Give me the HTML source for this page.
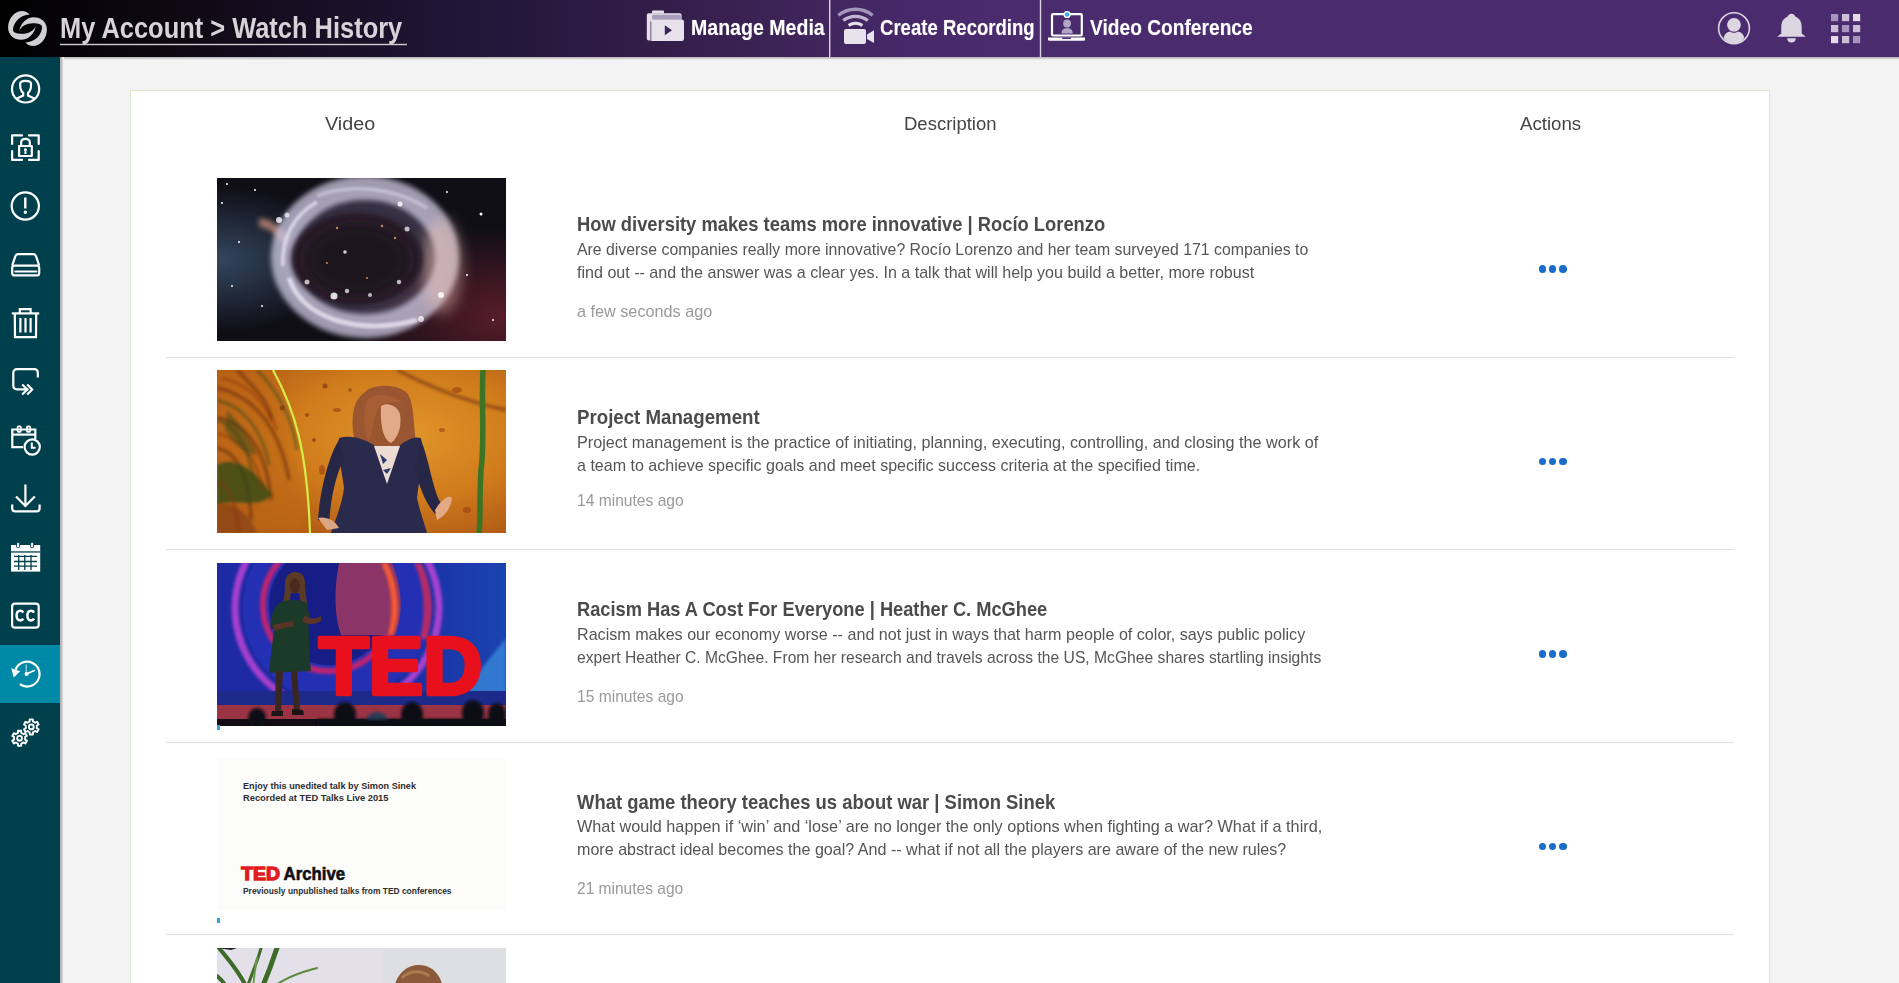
<!DOCTYPE html><html><head><meta charset="utf-8"><title>Watch History</title><style>
*{margin:0;padding:0;box-sizing:border-box}
html,body{width:1899px;height:983px;overflow:hidden;background:#f3f3f3;font-family:"Liberation Sans",sans-serif}
.a{position:absolute}
.t{position:absolute;white-space:nowrap;line-height:normal;transform-origin:0 0}
#hdr{left:0;top:0;width:1899px;height:57px;background:linear-gradient(90deg,#000 0%,#120b19 12%,#24163a 26%,#38214f 38%,#47296a 48%,#4a2b6d 52%,#4a2b6d 100%)}
#hsh{left:0;top:57px;width:1899px;height:3px;background:linear-gradient(#bdbdbd,#bdbdbd 33%,#e0e0e0 66%,#f3f3f3)}
#side{left:0;top:57px;width:60px;height:926px;background:#00404d}
#ssh{left:60px;top:57px;width:4px;height:926px;background:linear-gradient(90deg,#b8b5b5 0,#bdbaba 40%,#d8d8d8 60%,#ededed 85%,#f3f3f3)}
#act{left:0;top:644.5px;width:60px;height:58.3px;background:#0089a7}
#card{left:130px;top:90px;width:1640px;height:900px;background:#fff;border:1px solid #dbe9cd}
.sep{position:absolute;left:166px;width:1568px;height:1px;background:#dedede}
.dots{position:absolute;width:30px;height:8px}
.dots i{position:absolute;top:0;width:7.6px;height:7.6px;border-radius:50%;background:#1a6dc8}
.thumb{position:absolute;left:217px;width:289px;height:163px;overflow:hidden}
.prog{position:absolute;left:217px;width:3px;height:5px;background:#2aa3e0}
</style></head><body>
<div class="a" id="hdr"></div><div class="a" id="hsh"></div>

<svg class="a" style="left:0;top:0" width="1899" height="57">
<!-- logo -->
<g fill="#d0cfd2">
<path id="lgA" d="M29.6 14.4 C26.8 11.8 24.8 11 22.4 11 C14.5 11 8.1 18.5 8.1 27.5 C8.1 35 14 39.8 21.1 39.8 C28.5 39.8 34.5 33.5 35.8 26.2 C33.5 31 28.5 33.8 22 33.8 C16.5 33.8 12.6 32.5 13 29.5 C13.5 22 20 15 29.6 14.4 Z"/>
<use href="#lgA" transform="rotate(180 27.5 28.5)"/>
</g>
<rect x="60" y="43.8" width="347" height="1.4" fill="#cfcdd2"/>
<!-- dividers -->
<rect x="829" y="0" width="1.4" height="57" fill="#d9d2e1"/>
<rect x="1039.8" y="0" width="1.4" height="57" fill="#d9d2e1"/>
<!-- folder -->
<path d="M652 13.5 V11.6 C652 10.9 652.5 10.5 653.2 10.5 H663 C663.6 10.5 664 10.9 664 11.5 V13.5 Z" fill="#e4dfe9"/>
<path d="M648.8 13.3 H679.5 C680.8 13.3 681.6 14.1 681.6 15.4 V19.5 H652 V40.5 H648.8 C647.6 40.5 646.8 39.8 646.8 38.6 V15.4 C646.8 14.1 647.6 13.3 648.8 13.3 Z" fill="#e4dfe9"/>
<rect x="652" y="14.8" width="29" height="4.8" rx="1.5" fill="#a99dbd"/>
<rect x="650" y="19.4" width="34" height="21.5" rx="2.2" fill="#e6e1ea"/>
<path d="M650 21.4 V40.9 H651.5 V21.4 Z" fill="#3c2a55" opacity=".5"/>
<path d="M664.8 25.3 L672 30.3 L664.8 35.3 Z" fill="#3a2456"/>
<!-- recording -->
<g fill="none" stroke-linecap="butt">
<path d="M838.3 15.3 A27.3 27.3 0 0 1 872.7 15.3" stroke="#a395bb" stroke-width="3.4"/>
<path d="M843.2 20.6 A20 20 0 0 1 867.8 20.6" stroke="#c2b6d2" stroke-width="3.2"/>
<path d="M848.6 25.4 A13.2 13.2 0 0 1 862.4 25.4" stroke="#e6e1ec" stroke-width="3"/>
</g>
<rect x="844" y="29" width="22" height="15" rx="2" fill="#e7e3ec"/>
<path d="M867 34.6 L874 30.2 V43 L867 39 Z" fill="#e7e3ec"/>
<!-- laptop -->
<rect x="1052" y="14.1" width="29.8" height="21.4" rx="1" fill="none" stroke="#fff" stroke-width="2.2"/>
<path d="M1048 37.6 H1085 V39.5 C1085 40.3 1084.4 40.8 1083.6 40.8 H1049.4 C1048.6 40.8 1048 40.3 1048 39.5 Z" fill="#fff"/>
<path d="M1062 37.6 H1071 V38.3 C1071 38.6 1070.6 38.9 1070 38.9 H1063 C1062.4 38.9 1062 38.6 1062 38.3 Z" fill="#4a2b6d"/>
<circle cx="1067.1" cy="14.5" r="3.6" fill="#fff"/>
<circle cx="1067.1" cy="14.5" r="2.3" fill="#3ab0e6"/>
<circle cx="1067.1" cy="23.5" r="3.9" fill="#b3a6c6"/>
<path d="M1061.5 33.5 C1061.5 30 1063.5 28.3 1067.1 28.3 C1070.7 28.3 1072.7 30 1072.7 33.5 Z" fill="#b3a6c6"/>
<!-- right icons -->
<circle cx="1734" cy="28.2" r="15.4" fill="none" stroke="#dcd6e3" stroke-width="1.6"/>
<circle cx="1734" cy="24.8" r="6.9" fill="#dcd6e3"/>
<path d="M1723.6 37.8 C1724.8 33.5 1727.5 31.6 1730 31.4 C1731.2 32.3 1732.5 32.7 1734 32.7 C1735.5 32.7 1736.8 32.3 1738 31.4 C1740.5 31.6 1743.2 33.5 1744.4 37.8 C1741.8 41.6 1738.2 43.6 1734 43.6 C1729.8 43.6 1726.2 41.6 1723.6 37.8 Z" fill="#dcd6e3"/>
<path d="M1791.5 13.8 C1789 13.8 1788.5 15.4 1787.4 16.8 C1783 18.4 1781.3 22.6 1781.3 27 V33.5 L1777.2 36.8 H1805.8 L1801.7 33.5 V27 C1801.7 22.6 1800 18.4 1795.6 16.8 C1794.5 15.4 1794 13.8 1791.5 13.8 Z" fill="#dcd6e3"/>
<path d="M1787.2 38.2 H1795.8 C1795.8 41 1794 42.6 1791.5 42.6 C1789 42.6 1787.2 41 1787.2 38.2 Z" fill="#dcd6e3"/>
<g>
<rect x="1831" y="14" width="7.2" height="7.2" fill="#a594bc"/>
<rect x="1842" y="14" width="7.2" height="7.2" fill="#cbc0d7"/>
<rect x="1853" y="14" width="7.2" height="7.2" fill="#e2dbe8"/>
<rect x="1831" y="25" width="7.2" height="7.2" fill="#cbc0d7"/>
<rect x="1842" y="25" width="7.2" height="7.2" fill="#a594bc"/>
<rect x="1853" y="25" width="7.2" height="7.2" fill="#cbc0d7"/>
<rect x="1831" y="36" width="7.2" height="7.2" fill="#e2dbe8"/>
<rect x="1842" y="36" width="7.2" height="7.2" fill="#cbc0d7"/>
<rect x="1853" y="36" width="7.2" height="7.2" fill="#a594bc"/>
</g>
</svg>
<div class="a" id="card"></div>
<div class="a" id="side"></div><div class="a" id="ssh"></div><div class="a" id="act"></div>
<svg class="a" style="left:0;top:57px" width="60" height="926" viewBox="0 57 60 926">
<g stroke="#fff" fill="none" stroke-width="2.2">
<circle cx="25.6" cy="88.9" r="13.6"/>
<path d="M16.4 98.8 L23.2 95.6 V93 C21.2 91.4 20.2 88.6 20.2 85.6 V83.8 C20.2 81.7 22.2 80.9 25.6 80.9 C29 80.9 31 81.7 31 83.8 V85.6 C31 88.6 30 91.4 28 93 V95.6 L34.8 98.8"/>
</g>
<g stroke="#fff" fill="none" stroke-width="2.2" stroke-width="2.1" stroke-linecap="round" stroke-linejoin="round">
<path d="M12.1 144 V135.4 H22 M29 135.4 H38.7 V144 M38.7 151.2 V159.9 H29 M22 159.9 H12.1 V151.2"/>
<rect x="19.1" y="146" width="12.7" height="10"/>
<path d="M21.1 146 V142.6 C21.1 139.9 23 138.9 25.45 138.9 C27.9 138.9 29.8 139.9 29.8 142.6 V146"/>
</g>
<path d="M25.45 148.2 C26.4 148.2 27 148.9 27 149.8 C27 150.4 26.7 150.8 26.3 151.1 L26.6 154 H24.3 L24.6 151.1 C24.2 150.8 23.9 150.4 23.9 149.8 C23.9 148.9 24.5 148.2 25.45 148.2 Z" fill="#fff"/>
<g stroke="#fff" fill="none" stroke-width="2.2">
<circle cx="25.3" cy="206" r="13.6"/>
<path d="M25.3 197.5 V208.5" stroke-width="2.4"/>
<circle cx="25.3" cy="212.3" r="1" stroke-width="1.4"/>
</g>
<g stroke="#fff" fill="none" stroke-width="2.2">
<path d="M12.2 265.6 L15.3 256.4 C15.8 255 16.8 254.2 18.4 254.2 H33 C34.6 254.2 35.6 255 36.1 256.4 L39.2 265.6"/>
<rect x="12.2" y="265.6" width="27" height="9.8" rx="2.5"/>
<path d="M15.2 271.6 H36.4" stroke-width="2" stroke-linecap="round"/>
</g>
<g stroke="#fff" fill="none" stroke-width="2.2">
<path d="M11.8 313.4 H39.2"/>
<path d="M19.8 313 V309.2 H30.6 V313"/>
<path d="M14.8 313.4 L15 337.2 H36 L36.2 313.4"/>
<path d="M20.4 318 V332.5 M25.5 318 V332.5 M30.6 318 V332.5"/>
</g>
<g stroke="#fff" fill="none" stroke-width="2.2">
<path d="M37.8 377.6 V373 C37.8 370.6 36.5 369.2 34.2 369.2 H17 C14.7 369.2 13.3 370.6 13.3 373 V385.6 C13.3 388 14.7 389.3 17 389.3 H28.4"/>
<path d="M22.2 384.4 L27.2 389.5 L22.2 394.6 M27.2 384.4 L32.2 389.5 L27.2 394.6" stroke-width="2.2"/>
</g>
<g stroke="#fff" fill="none" stroke-width="2.2">
<path d="M23 447.2 H12.3 V429.5 H35.3 V439"/>
<path d="M12.3 434.6 H35.3"/>
<rect x="17.6" y="426.3" width="3.2" height="5.6" rx="1" stroke-width="1.8"/>
<rect x="27" y="426.3" width="3.2" height="5.6" rx="1" stroke-width="1.8"/>
<circle cx="32.2" cy="447" r="7.6" fill="#00404d"/>
<path d="M31.8 442.5 V447.8 H35.6" stroke-width="2"/>
</g>
<g stroke="#fff" fill="none" stroke-width="2.2">
<path d="M25.4 484.5 V506"/>
<path d="M16 496.5 L25.4 506 L34.8 496.5"/>
<path d="M12.2 504.5 V508.5 C12.2 510.6 13.4 511.4 15.4 511.4 H36.4 C38.4 511.4 39.6 510.6 39.6 508.5 V504.5"/>
</g>
<rect x="11" y="545" width="29.2" height="26.6" fill="#fff"/>
<rect x="11" y="551.3" width="29.2" height="1.3" fill="#00404d"/>
<g stroke="#00404d" stroke-width="1.3" fill="none">
<path d="M18.7 555 V570 M24.8 555 V570 M31 555 V570 M14 556.4 H37 M14 561.5 H37 M14 566.2 H37"/>
</g>
<rect x="16.6" y="542.6" width="3" height="5" rx="1" fill="#fff" stroke="#00404d" stroke-width="1"/>
<rect x="30.6" y="542.6" width="3" height="5" rx="1" fill="#fff" stroke="#00404d" stroke-width="1"/>
<rect x="12.1" y="603.7" width="26.6" height="24" rx="3" stroke="#fff" fill="none" stroke-width="2.2"/>
<g fill="none" stroke="#fff" stroke-width="2.5"><path d="M23.2 612.6 C22.6 611.4 21.6 610.8 20.2 610.8 C17.9 610.8 16.6 612.6 16.6 615.6 C16.6 618.6 17.9 620.4 20.2 620.4 C21.6 620.4 22.6 619.8 23.2 618.6"/><path d="M34 612.6 C33.4 611.4 32.4 610.8 31 610.8 C28.7 610.8 27.4 612.6 27.4 615.6 C27.4 618.6 28.7 620.4 31 620.4 C32.4 620.4 33.4 619.8 34 618.6"/></g>
<g stroke="#fff" fill="none" stroke-width="2.2">
<path d="M15.6 669.6 A12.4 12.4 0 1 1 19.9 684.2"/>
<path d="M26.3 673.8 V664.5" stroke-width="1.3" stroke="#9fd6e2"/>
<path d="M26.5 674 L34.8 670.2" stroke-width="1.8"/>
</g>
<circle cx="26.5" cy="674" r="2" fill="#fff"/>
<path d="M11.2 668.2 L20.2 671.3 L13.8 677.5 Z" fill="#fff"/>
<g fill="none" stroke="#fff" stroke-width="1.9" stroke-linejoin="round">
<path d="M29.71 721.43 L29.70 719.37 L32.90 719.37 L32.89 721.43 L35.25 722.79 L37.02 721.75 L38.62 724.52 L36.84 725.54 L36.84 728.26 L38.62 729.28 L37.02 732.05 L35.25 731.01 L32.89 732.37 L32.90 734.43 L29.70 734.43 L29.71 732.37 L27.35 731.01 L25.58 732.05 L23.98 729.28 L25.76 728.26 L25.76 725.54 L23.98 724.52 L25.58 721.75 L27.35 722.79 Z"/><circle cx="31.3" cy="726.9" r="2.4"/>
<path d="M18.01 732.83 L18.00 730.77 L21.20 730.77 L21.19 732.83 L23.55 734.19 L25.32 733.15 L26.92 735.92 L25.14 736.94 L25.14 739.66 L26.92 740.68 L25.32 743.45 L23.55 742.41 L21.19 743.77 L21.20 745.83 L18.00 745.83 L18.01 743.77 L15.65 742.41 L13.88 743.45 L12.28 740.68 L14.06 739.66 L14.06 736.94 L12.28 735.92 L13.88 733.15 L15.65 734.19 Z"/><circle cx="19.6" cy="738.3" r="2.4"/>
</g>
</svg>
<div class="sep" style="top:357px"></div>
<div class="sep" style="top:549px"></div>
<div class="sep" style="top:742px"></div>
<div class="sep" style="top:934px"></div>
<div class="thumb" style="top:178px"><svg width="289" height="163" viewBox="0 0 289 163">
<defs>
<radialGradient id="n_l" cx="0" cy=".5" r=".45"><stop offset="0" stop-color="#34465e"/><stop offset="1" stop-color="#34465e" stop-opacity="0"/></radialGradient>
<radialGradient id="n_r" cx="1" cy=".85" r=".55"><stop offset="0" stop-color="#5a1c2a"/><stop offset="1" stop-color="#5a1c2a" stop-opacity="0"/></radialGradient>
<radialGradient id="n_in" cx=".5" cy=".5" r=".5"><stop offset="0" stop-color="#1c121c"/><stop offset=".75" stop-color="#2a1a28"/><stop offset="1" stop-color="#5a4a66"/></radialGradient>
<filter id="blur3" filterUnits="userSpaceOnUse" x="-100" y="-100" width="500" height="400"><feGaussianBlur stdDeviation="2.5"/></filter>
<filter id="blur6" filterUnits="userSpaceOnUse" x="-100" y="-100" width="500" height="400"><feGaussianBlur stdDeviation="7"/></filter>
<filter id="blur1" filterUnits="userSpaceOnUse" x="-100" y="-100" width="500" height="400"><feGaussianBlur stdDeviation="1"/></filter>
</defs>
<rect width="289" height="163" fill="#0f0e16"/>
<rect width="289" height="163" fill="url(#n_l)"/>
<rect width="289" height="163" fill="url(#n_r)"/>
<path d="M42 45 C50 44 62 52 70 64" fill="none" stroke="#f0a888" stroke-width="9" opacity=".6" filter="url(#blur3)"/>
<ellipse cx="150" cy="79" rx="86" ry="70" fill="#6a6480" opacity=".42" filter="url(#blur6)"/>
<ellipse cx="148" cy="79" rx="82" ry="69" fill="none" stroke="#d4cee6" stroke-width="24" opacity=".72" filter="url(#blur3)"/>
<ellipse cx="225" cy="88" rx="20" ry="48" fill="#f2c4b4" opacity=".45" filter="url(#blur6)"/>
<ellipse cx="140" cy="81" rx="66" ry="46" fill="#2a1c2c" filter="url(#blur3)"/>
<ellipse cx="140" cy="82" rx="52" ry="36" fill="#1c121c" filter="url(#blur6)"/>
<path d="M72 100 C85 140 140 158 200 142" fill="none" stroke="#f0ecf8" stroke-width="5" opacity=".7" filter="url(#blur1)"/>
<path d="M66 88 C64 60 78 36 100 24" fill="none" stroke="#e8e4f4" stroke-width="4" opacity=".7" filter="url(#blur1)"/>
<path d="M100 18 C130 6 175 8 210 30" fill="none" stroke="#d8d4ea" stroke-width="4" opacity=".55" filter="url(#blur1)"/>
<g fill="#fff">
<circle cx="117" cy="118" r="3.5" opacity=".85"/><circle cx="62" cy="42" r="3" opacity=".8"/><circle cx="70" cy="37" r="2.5" opacity=".7"/><circle cx="183" cy="26" r="2.5" opacity=".8"/>
<circle cx="190" cy="51" r="2.5" opacity=".7"/><circle cx="224" cy="117" r="3" opacity=".85"/><circle cx="204" cy="141" r="3" opacity=".7"/>
<circle cx="128" cy="74" r="1.8" opacity=".8"/><circle cx="130" cy="113" r="2.2" opacity=".7"/><circle cx="153" cy="117" r="2" opacity=".7"/><circle cx="182" cy="104" r="2.2" opacity=".7"/><circle cx="90" cy="104" r="2.5" opacity=".7"/>
<circle cx="264" cy="36" r="1.5"/><circle cx="5" cy="25" r="1"/><circle cx="15" cy="108" r="1"/><circle cx="45" cy="128" r="1"/><circle cx="276" cy="142" r="1"/>
<circle cx="250" cy="97" r="1"/><circle cx="230" cy="14" r="1"/><circle cx="22" cy="64" r="1"/><circle cx="10" cy="6" r="1"/><circle cx="38" cy="12" r="1"/>
</g>
<g fill="#f0a070" opacity=".8"><circle cx="120" cy="50" r="1.2"/><circle cx="165" cy="48" r="1.2"/><circle cx="178" cy="60" r="1.2"/><circle cx="110" cy="85" r="1"/><circle cx="150" cy="100" r="1"/></g>
</svg></div>
<div class="thumb" style="top:370px"><svg width="289" height="163" viewBox="0 0 289 163">
<defs>
<radialGradient id="o_bg" cx=".65" cy=".4" r=".7"><stop offset="0" stop-color="#e0962a"/><stop offset=".55" stop-color="#d07c1c"/><stop offset="1" stop-color="#b05a16"/></radialGradient>
<filter id="ob2" filterUnits="userSpaceOnUse" x="-100" y="-100" width="500" height="400"><feGaussianBlur stdDeviation="1.5"/></filter>
<filter id="ob4" filterUnits="userSpaceOnUse" x="-100" y="-100" width="500" height="400"><feGaussianBlur stdDeviation="4"/></filter>
</defs>
<rect width="289" height="163" fill="url(#o_bg)"/>
<path d="M0 0 H60 C70 50 80 100 90 163 H0 Z" fill="#c06a18" opacity=".6" filter="url(#ob4)"/>
<g fill="none" stroke="#6a2e10" stroke-width="3.5" opacity=".6" filter="url(#ob2)">
<path d="M0 18 C35 25 62 55 72 110"/><path d="M0 48 C28 52 50 80 54 130"/><path d="M0 78 C18 82 32 100 34 150"/>
<path d="M20 0 C40 20 50 30 55 50"/><path d="M180 0 C200 10 240 30 289 40"/>
</g>
<path d="M0 95 C15 85 40 100 55 125 C40 140 20 128 0 135 Z" fill="#2a4a18" opacity=".75" filter="url(#ob2)"/>
<path d="M0 135 C15 130 30 140 40 163 H0 Z" fill="#7a3a12" opacity=".6" filter="url(#ob2)"/>
<g fill="none" stroke="#8a3010" stroke-width="2.5" opacity=".55" filter="url(#ob2)"><path d="M5 8 C30 14 48 30 60 60"/><path d="M0 64 C20 66 40 84 45 120"/><path d="M0 112 C10 115 20 130 22 163"/></g>
<g fill="none" stroke="#3a4a1a" stroke-width="3" opacity=".55" filter="url(#ob2)"><path d="M0 30 C25 36 45 58 52 95"/><path d="M0 50 C18 55 32 75 36 110"/><path d="M40 0 C60 20 75 45 80 80"/></g>
<g fill="#8a2a0c" opacity=".45"><ellipse cx="120" cy="40" rx="4" ry="2"/><ellipse cx="105" cy="100" rx="3" ry="5"/><ellipse cx="240" cy="20" rx="5" ry="3"/><ellipse cx="250" cy="140" rx="4" ry="3"/><ellipse cx="225" cy="60" rx="3" ry="2"/></g>
<path d="M10 40 C25 55 35 70 40 85 C28 85 15 72 8 60 Z" fill="#3a4a18" opacity=".5" filter="url(#ob2)"/>
<g fill="#7a3010" opacity=".6"><circle cx="108" cy="16" r="2.5"/><circle cx="133" cy="20" r="1.8"/><circle cx="65" cy="38" r="2.5"/><circle cx="90" cy="45" r="2"/><circle cx="97" cy="70" r="2"/></g>
<path d="M56 0 C78 40 90 80 93 163" fill="none" stroke="#d6ec4a" stroke-width="2.2"/>
<path d="M266 0 C264 40 268 70 264 100 C262 130 264 150 262 163" fill="none" stroke="#3a7424" stroke-width="5.5"/>
<!-- woman -->
<path d="M148 22 C155 14 180 13 190 23 C198 33 196 58 200 78 L188 88 L150 88 C138 80 134 60 136 45 C137 35 140 28 148 22 Z" fill="#9a5630"/>
<path d="M164 36 C170 32 180 35 183 44 C185 56 181 68 174 73 C167 70 163 58 164 36 Z" fill="#e2aa88"/>
<path d="M150 30 C160 22 178 24 186 34 C178 30 166 32 160 40 C156 50 156 62 152 72 C146 60 146 40 150 30 Z" fill="#a85e34"/>
<path d="M122 68 C135 64 150 70 158 76 L182 76 C190 70 196 66 204 68 C207 90 202 110 200 128 C203 142 208 155 210 163 L114 163 C118 150 125 135 127 118 C125 100 120 85 122 68 Z" fill="#2a2a4c"/>
<path d="M122 70 C112 85 103 120 101 150 L112 153 C114 126 120 100 128 88 Z" fill="#262646"/>
<path d="M204 70 C212 90 215 115 222 130 L226 136 L218 144 C208 132 203 118 198 100 Z" fill="#262646"/>
<path d="M157 76 L183 76 L170 114 Z" fill="#ecdcd4"/>
<path d="M163 84 L170 90 L166 94 Z M166 100 L174 98 L170 104 Z" fill="#2a3a6a"/>
<path d="M218 140 C224 130 232 124 235 128 C234 138 228 146 220 150 Z" fill="#e4aa86"/>
<path d="M101 148 C108 146 118 150 122 158 L110 160 Z" fill="#dca684"/>
</svg></div>
<div class="thumb" style="top:563px"><svg width="289" height="163" viewBox="0 0 289 163">
<defs>
<filter id="bb2" filterUnits="userSpaceOnUse" x="-100" y="-100" width="500" height="400"><feGaussianBlur stdDeviation="1.5"/></filter>
<filter id="bb4" filterUnits="userSpaceOnUse" x="-100" y="-100" width="500" height="400"><feGaussianBlur stdDeviation="4"/></filter>
<linearGradient id="b_bg" x1="0" x2="1"><stop offset="0" stop-color="#1e2aa4"/><stop offset=".55" stop-color="#1a28a0"/><stop offset="1" stop-color="#1a44b0"/></linearGradient>
</defs>
<rect width="289" height="163" fill="url(#b_bg)"/>
<circle cx="120" cy="45" r="102" fill="none" stroke="#c844d8" stroke-width="7" opacity=".8" filter="url(#bb2)"/>
<circle cx="120" cy="45" r="94" fill="#2430b4"/>
<circle cx="112" cy="42" r="66" fill="none" stroke="#d0206a" stroke-width="6" opacity=".9" filter="url(#bb2)"/>
<circle cx="112" cy="42" r="60" fill="#161e86"/>
<path d="M122 0 H175 C186 25 186 52 178 72 H124 C116 50 118 20 122 0 Z" fill="#8a3468"/>
<path d="M170 0 C182 22 184 52 176 72 L171 72 C177 52 176 22 164 0 Z" fill="#f85a30" filter="url(#bb2)"/>
<path d="M204 0 C216 22 218 52 210 76 L203 76 C209 52 208 22 197 0 Z" fill="#c82a60" opacity=".9" filter="url(#bb2)"/>
<path d="M245 130 L289 75 V130 Z" fill="#3a90e0" opacity=".7" filter="url(#bb2)"/>
<rect y="128" width="289" height="14" fill="#1e2a8a"/>
<rect y="142" width="289" height="14" fill="#9a3444"/>
<rect y="156" width="289" height="7" fill="#120c14"/>
<text x="102" y="130.5" font-family="Liberation Sans" font-weight="700" font-size="81" fill="#e8101c" stroke="#e8101c" stroke-width="4.5" stroke-linejoin="round" textLength="163" lengthAdjust="spacingAndGlyphs">TED</text>
<!-- woman -->
<path d="M68 24 C67 14 72 9 78 9 C85 9 89 14 88 24 C89 34 91 42 90 50 L84 48 C84 40 83 34 82 30 L74 30 C73 36 72 42 70 50 L64 50 C65 42 68 34 68 24 Z" fill="#5a3c24"/>
<ellipse cx="78" cy="23" rx="5" ry="7.5" fill="#4a2a1e"/>
<path d="M62 40 C68 36 84 36 90 40 C92 62 92 90 94 108 L52 110 C54 90 57 62 62 40 Z" fill="#1c3a2a"/>
<path d="M62 40 C55 48 52 58 54 66 L66 63 L66 46 Z" fill="#1c3a2a"/>
<path d="M88 42 C92 48 94 52 92 58 L84 58 Z" fill="#1c3a2a"/>
<path d="M56 62 C62 60 70 59 76 58 L77 63 C70 64 63 66 57 68 Z" fill="#5a3424"/>
<path d="M88 52 C92 56 97 57 104 53 L104 58 C97 62 90 62 85 58 Z" fill="#5a3424"/>
<path d="M59 108 L58 148 L64 150 L66 108 Z M74 108 L77 148 L83 148 L80 108 Z" fill="#3a2620"/>
<path d="M55 148 L66 148 L66 153 L54 153 Z M75 146 L86 147 L87 152 L75 152 Z" fill="#1a1414"/>
<g fill="#0e0c18" filter="url(#bb2)">
<ellipse cx="40" cy="155" rx="9" ry="10"/><ellipse cx="128" cy="152" rx="11" ry="13"/><ellipse cx="160" cy="158" rx="11" ry="9" fill="#2a3a58"/>
<ellipse cx="195" cy="152" rx="11" ry="13"/><ellipse cx="256" cy="150" rx="11" ry="13"/><ellipse cx="280" cy="152" rx="9" ry="12"/>
<rect x="100" y="156" width="189" height="10"/>
</g>
</svg></div>
<div class="thumb" style="top:755px"><svg width="289" height="163" viewBox="0 0 289 163">
<rect width="289" height="163" fill="#fff"/>
<rect x="0" y="3" width="289" height="152" fill="#fcfcfa"/>
<g font-family="Liberation Sans" font-weight="700" fill="#2e2e2e">
<text x="26" y="33.7" font-size="9.6" textLength="173" lengthAdjust="spacingAndGlyphs">Enjoy this unedited talk by Simon Sinek</text>
<text x="26" y="46" font-size="9.6" textLength="145.5" lengthAdjust="spacingAndGlyphs">Recorded at TED Talks Live 2015</text>
<text x="26" y="138.6" font-size="9.2" textLength="208.5" lengthAdjust="spacingAndGlyphs">Previously unpublished talks from TED conferences</text>
</g>
<text x="24.2" y="124.6" font-family="Liberation Sans" font-weight="700" font-size="18.4" fill="#e11b22" stroke="#e11b22" stroke-width="1.3" textLength="38.8" lengthAdjust="spacingAndGlyphs">TED</text>
<text x="66.6" y="124.6" font-family="Liberation Sans" font-weight="700" font-size="18.4" fill="#111" stroke="#111" stroke-width=".6" textLength="61.5" lengthAdjust="spacingAndGlyphs">Archive</text>
</svg></div>
<div class="thumb" style="top:948px"><svg width="289" height="163" viewBox="0 0 289 163">
<rect width="289" height="163" fill="#e3e0ea"/>
<rect x="166" width="123" height="163" fill="#dedfe3"/>
<g fill="none" stroke="#3e6a2a" stroke-linecap="round">
<path d="M2 0 C10 10 20 20 30 40" stroke-width="4"/>
<path d="M44 0 C40 15 35 25 30 40" stroke-width="3"/>
<path d="M60 0 C55 15 50 28 45 40" stroke-width="5"/>
<path d="M100 20 C80 25 65 32 55 40" stroke-width="2" stroke="#5a8a3a"/>
<path d="M0 28 C5 32 8 36 10 40" stroke-width="4"/>
<path d="M40 10 C38 20 37 30 36 40" stroke-width="2" stroke="#6a9a4a"/>
</g>
<path d="M0 0 H20 L14 2 Z" fill="#222"/>
<path d="M177 40 C180 25 190 17 202 17 C216 17 224 28 226 40 Z" fill="#8a5a3a"/>
<path d="M185 30 C192 22 205 22 212 28" fill="none" stroke="#b07a50" stroke-width="3"/>
</svg></div>
<div class="prog" style="top:725px"></div>
<div class="prog" style="top:918px"></div>
<div class="dots" style="left:1538.8px;top:265.2px"><i style="left:0"></i><i style="left:10.1px"></i><i style="left:20.2px"></i></div>
<div class="dots" style="left:1538.8px;top:457.7px"><i style="left:0"></i><i style="left:10.1px"></i><i style="left:20.2px"></i></div>
<div class="dots" style="left:1538.8px;top:650.2px"><i style="left:0"></i><i style="left:10.1px"></i><i style="left:20.2px"></i></div>
<div class="dots" style="left:1538.8px;top:842.7px"><i style="left:0"></i><i style="left:10.1px"></i><i style="left:20.2px"></i></div>
<span class="t" id="t0" style="left:60px;top:11.20px;font-size:29.5px;font-weight:700;color:#d6d4d9;transform:scaleX(0.8621);">My Account &gt; Watch History</span>
<span class="t" id="t1" style="left:690.5px;top:15.94px;font-size:21.5px;font-weight:700;color:#ffffff;transform:scaleX(0.9098);text-shadow:0 0 1px rgba(255,255,255,.4);">Manage Media</span>
<span class="t" id="t2" style="left:880px;top:15.94px;font-size:21.5px;font-weight:700;color:#ffffff;transform:scaleX(0.8632);text-shadow:0 0 1px rgba(255,255,255,.4);">Create Recording</span>
<span class="t" id="t3" style="left:1090.3px;top:15.94px;font-size:21.5px;font-weight:700;color:#ffffff;transform:scaleX(0.8920);text-shadow:0 0 1px rgba(255,255,255,.4);">Video Conference</span>
<span class="t" id="t4" style="left:325px;top:112.80px;font-size:18.9px;font-weight:400;color:#444;transform:scaleX(1.0462);">Video</span>
<span class="t" id="t5" style="left:904px;top:112.80px;font-size:18.9px;font-weight:400;color:#444;transform:scaleX(0.9788);">Description</span>
<span class="t" id="t6" style="left:1519.5px;top:112.80px;font-size:18.9px;font-weight:400;color:#444;transform:scaleX(0.9878);">Actions</span>
<span class="t" id="t7" style="left:577px;top:212.19px;font-size:21px;font-weight:700;color:#4b4b4b;transform:scaleX(0.8737);">How diversity makes teams more innovative | Rocío Lorenzo</span>
<span class="t" id="t8" style="left:577px;top:239.96px;font-size:16.4px;font-weight:400;color:#555;transform:scaleX(0.9658);">Are diverse companies really more innovative? Rocío Lorenzo and her team surveyed 171 companies to</span>
<span class="t" id="t9" style="left:577px;top:262.76px;font-size:16.4px;font-weight:400;color:#555;transform:scaleX(0.9806);">find out -- and the answer was a clear yes. In a talk that will help you build a better, more robust</span>
<span class="t" id="t10" style="left:577px;top:302.46px;font-size:16.4px;font-weight:400;color:#9a9a9a;transform:scaleX(0.9891);">a few seconds ago</span>
<span class="t" id="t11" style="left:577px;top:404.80px;font-size:21px;font-weight:700;color:#4b4b4b;transform:scaleX(0.8895);">Project Management</span>
<span class="t" id="t12" style="left:577px;top:432.76px;font-size:16.4px;font-weight:400;color:#555;transform:scaleX(0.9873);">Project management is the practice of initiating, planning, executing, controlling, and closing the work of</span>
<span class="t" id="t13" style="left:577px;top:455.76px;font-size:16.4px;font-weight:400;color:#555;transform:scaleX(0.9786);">a team to achieve specific goals and meet specific success criteria at the specified time.</span>
<span class="t" id="t14" style="left:577px;top:490.76px;font-size:16.4px;font-weight:400;color:#9a9a9a;transform:scaleX(0.9520);">14 minutes ago</span>
<span class="t" id="t15" style="left:577px;top:596.60px;font-size:21px;font-weight:700;color:#4b4b4b;transform:scaleX(0.8689);">Racism Has A Cost For Everyone | Heather C. McGhee</span>
<span class="t" id="t16" style="left:577px;top:624.66px;font-size:16.4px;font-weight:400;color:#555;transform:scaleX(0.9832);">Racism makes our economy worse -- and not just in ways that harm people of color, says public policy</span>
<span class="t" id="t17" style="left:577px;top:647.76px;font-size:16.4px;font-weight:400;color:#555;transform:scaleX(0.9555);">expert Heather C. McGhee. From her research and travels across the US, McGhee shares startling insights</span>
<span class="t" id="t18" style="left:577px;top:687.46px;font-size:16.4px;font-weight:400;color:#9a9a9a;transform:scaleX(0.9520);">15 minutes ago</span>
<span class="t" id="t19" style="left:577px;top:789.79px;font-size:21px;font-weight:700;color:#4b4b4b;transform:scaleX(0.8774);">What game theory teaches us about war | Simon Sinek</span>
<span class="t" id="t20" style="left:577px;top:817.16px;font-size:16.4px;font-weight:400;color:#555;transform:scaleX(0.9906);">What would happen if ‘win’ and ‘lose’ are no longer the only options when fighting a war? What if a third,</span>
<span class="t" id="t21" style="left:577px;top:840.36px;font-size:16.4px;font-weight:400;color:#555;transform:scaleX(0.9816);">more abstract ideal becomes the goal? And -- what if not all the players are aware of the new rules?</span>
<span class="t" id="t22" style="left:577px;top:879.46px;font-size:16.4px;font-weight:400;color:#9a9a9a;transform:scaleX(0.9476);">21 minutes ago</span>
</body></html>
